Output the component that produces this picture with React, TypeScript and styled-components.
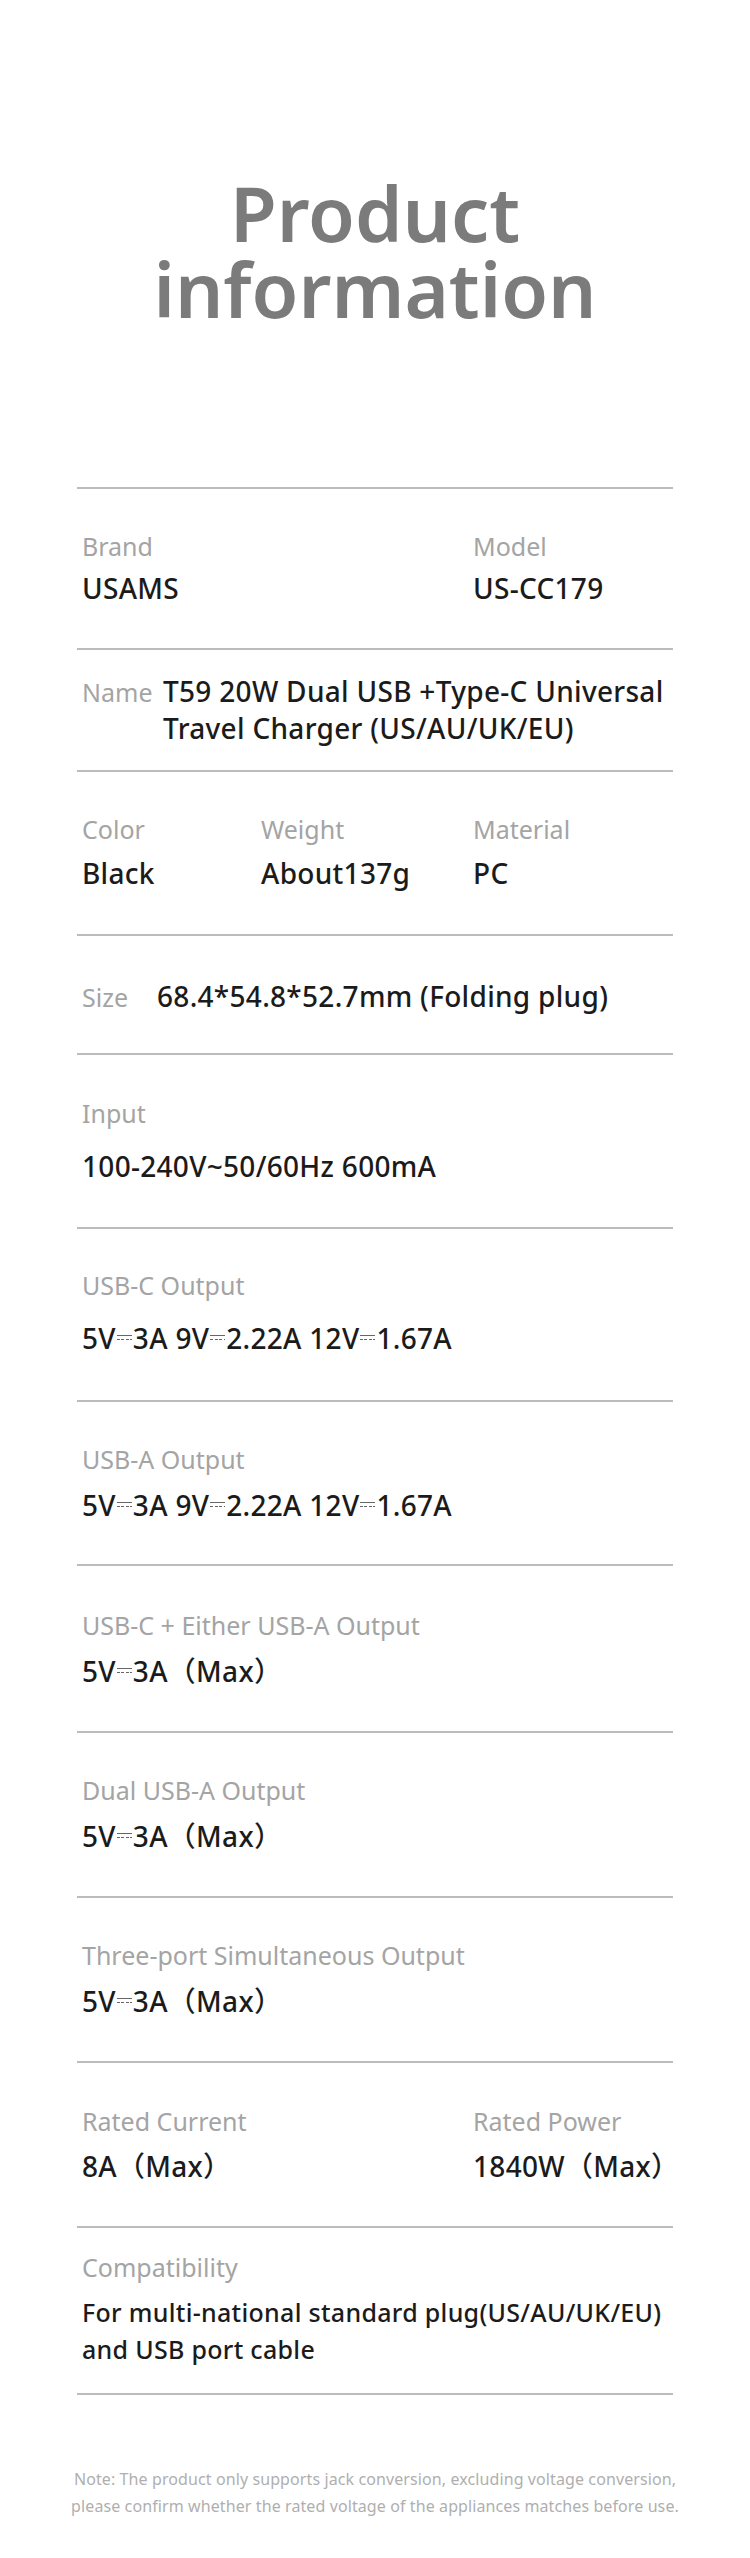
import * as React from 'react'
import styled, { createGlobalStyle } from 'styled-components'

const GlobalStyle = createGlobalStyle`
html, body {
  margin: 0;
  padding: 0;
  background: #fff;
}
body {
  font-family: "Noto Sans", "Noto Sans CJK SC", sans-serif;
}
`

const Page = styled.div`
width: 750px;
padding-bottom: 38px;
`

const Title = styled.h1`
margin: 0;
padding-top: 175px;
font-size: 76px;
line-height: 76px;
font-weight: 600;
color: #7b7b7b;
text-align: center;
`

const List = styled.div`
margin: 160px 77px 0;
border-bottom: 2px solid #bcbcbc;
`

interface ISectionProps {
  $pt?: number,
  $pb?: number,
}
const Section = styled.section<ISectionProps>`
border-top: 2px solid #bcbcbc;
padding: ${p => p.$pt ?? 40}px 5px ${p => p.$pb ?? 41}px;
`

const Cols = styled.div<{ $cols: string }>`
display: grid;
grid-template-columns: ${p => p.$cols};
`

const Cell = styled.div<{ $gap?: number }>`
display: flex;
flex-direction: column;
gap: ${p => p.$gap ?? 11}px;
`

const Row = styled.div`
display: flex;
align-items: baseline;
`

const Label = styled.div<{ $w?: number }>`
font-size: 25px;
line-height: 34px;
color: #a4a4a4;
white-space: nowrap;
${p => p.$w ? `width: ${p.$w}px; flex: none;` : ''}
`

const Value = styled.div<{ $size?: number }>`
font-size: ${p => p.$size ?? 28}px;
line-height: 37px;
letter-spacing: 0.3px;
font-weight: 550;
color: #1b1b1b;
`

// the little "direct current" mark: one solid line over a dashed one
const Dc = styled.span`
display: inline-block;
width: 15px;
height: 5px;
margin: 0 1px;
vertical-align: 0.32em;
border-top: 1.5px solid #666;
box-sizing: border-box;
background: repeating-linear-gradient(to right, #666 0 3px, transparent 3px 4.5px) left bottom / 100% 1.5px no-repeat;
`

const Note = styled.p`
margin: 71px 0 0;
font-size: 16px;
line-height: 27px;
letter-spacing: 0.1px;
color: #afafaf;
text-align: center;
`

const Volts = () => (
  <>5V<Dc />3A 9V<Dc />2.22A 12V<Dc />1.67A</>
)

const MaxFive = () => (
  <>5V<Dc />3A（Max）</>
)

const simple: { label: string, value: React.ReactNode, pt?: number, pb?: number, gap?: number }[] = [
  { label: 'Input', value: '100-240V~50/60Hz 600mA', pt: 41, gap: 18, pb: 42 },
  { label: 'USB-C Output', value: <Volts />, pt: 39, gap: 18, pb: 43 },
  { label: 'USB-A Output', value: <Volts />, pt: 40, gap: 11, pb: 40 },
  { label: 'USB-C + Either USB-A Output', value: <MaxFive />, pt: 42, gap: 11, pb: 41 },
  { label: 'Dual USB-A Output', value: <MaxFive />, pt: 40, gap: 11, pb: 41 },
  { label: 'Three-port Simultaneous Output', value: <MaxFive />, pt: 40, gap: 11, pb: 41 },
]

export default function App() {
  return (
    <Page>
      <GlobalStyle />
      <Title>Product<br />information</Title>
      <List>
        <Section $pt={40} $pb={41}>
          <Cols $cols="391px 1fr">
            <Cell $gap={7}><Label>Brand</Label><Value>USAMS</Value></Cell>
            <Cell $gap={7}><Label>Model</Label><Value>US-CC179</Value></Cell>
          </Cols>
        </Section>

        <Section $pt={23} $pb={23}>
          <Row>
            <Label $w={81}>Name</Label>
            <Value>T59 20W Dual USB +Type-C Universal Travel Charger (US/AU/UK/EU)</Value>
          </Row>
        </Section>

        <Section $pt={40} $pb={42}>
          <Cols $cols="179px 212px 1fr">
            <Cell $gap={9}><Label>Color</Label><Value>Black</Value></Cell>
            <Cell $gap={9}><Label>Weight</Label><Value>About137g</Value></Cell>
            <Cell $gap={9}><Label>Material</Label><Value>PC</Value></Cell>
          </Cols>
        </Section>

        <Section $pt={42} $pb={38}>
          <Row>
            <Label $w={75}>Size</Label>
            <Value>68.4*54.8*52.7mm (Folding plug)</Value>
          </Row>
        </Section>

        {simple.map(s => (
          <Section key={s.label} $pt={s.pt} $pb={s.pb}>
            <Cell $gap={s.gap}>
              <Label>{s.label}</Label>
              <Value>{s.value}</Value>
            </Cell>
          </Section>
        ))}

        <Section $pt={41} $pb={41}>
          <Cols $cols="391px 1fr">
            <Cell $gap={10}><Label>Rated Current</Label><Value>8A（Max）</Value></Cell>
            <Cell $gap={10}><Label>Rated Power</Label><Value>1840W（Max）</Value></Cell>
          </Cols>
        </Section>

        <Section $pt={22} $pb={25}>
          <Cell $gap={10}>
            <Label>Compatibility</Label>
            <Value $size={25}>For multi-national standard plug(US/AU/UK/EU)<br />and USB port cable</Value>
          </Cell>
        </Section>
      </List>
      <Note>
        Note: The product only supports jack conversion, excluding voltage conversion,<br />
        please confirm whether the rated voltage of the appliances matches before use.
      </Note>
    </Page>
  )
}
